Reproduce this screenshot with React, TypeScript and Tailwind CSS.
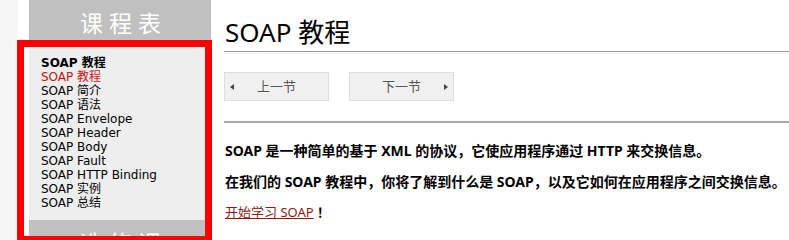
import React from 'react';

const LESSONS = [
  'SOAP 简介',
  'SOAP 语法',
  'SOAP Envelope',
  'SOAP Header',
  'SOAP Body',
  'SOAP Fault',
  'SOAP HTTP Binding',
  'SOAP 实例',
  'SOAP 总结',
];

export default function App() {
  return (
    <div className="relative flex h-[240px] w-[789px] overflow-hidden bg-white font-['DejaVu_Sans','Noto_Sans_CJK_SC',sans-serif] text-black">
      <div className="w-[18px] shrink-0 bg-[#f5f5f5]" />
      <div className="w-[11px] shrink-0" />

      {/* sidebar */}
      <aside className="w-[182px] shrink-0 bg-[#eeeeee]">
        <h2 className="h-[40px] overflow-hidden bg-[#c0c0c0] pl-[7px] text-center font-['Noto_Sans_CJK_SC',sans-serif] text-[23px] leading-[44px] tracking-[6px] text-white">
          课程表
        </h2>
        <ul className="px-[12px] pb-[10px] pt-[16px] text-[12px] leading-[14px]">
          <li className="font-bold">SOAP 教程</li>
          <li className="text-[#cc1111]">SOAP 教程</li>
          {LESSONS.map((l) => (
            <li key={l}>{l}</li>
          ))}
        </ul>
        <h2 className="h-[40px] overflow-hidden bg-[#c0c0c0] pl-[7px] text-center font-['Noto_Sans_CJK_SC',sans-serif] text-[23px] leading-[44px] tracking-[6px] text-white">
          选修课
        </h2>
      </aside>

      {/* main */}
      <main className="flex-1 pl-[13px] font-['Noto_Sans','Noto_Sans_CJK_SC',sans-serif]">
        <h1 className="pl-[1px] pt-[14px] text-[26px] leading-[36px]">SOAP 教程</h1>
        <div className="mt-[1px] h-px bg-[#999999]" />

        <div className="mt-[20px] flex gap-[20px] text-[13px] text-[#555555]">
          <button className="relative h-[29px] w-[105px] border border-[#dddddd] bg-[#f0f0f0]">
            <span className="absolute left-[5px] top-[11px] h-0 w-0 border-y-[3px] border-r-[4px] border-y-transparent border-r-[#444444]" />
            上一节
          </button>
          <button className="relative h-[29px] w-[105px] border border-[#dddddd] bg-[#f0f0f0]">
            下一节
            <span className="absolute right-[5px] top-[11px] h-0 w-0 border-y-[3px] border-l-[4px] border-y-transparent border-l-[#444444]" />
          </button>
        </div>

        <div className="mt-[20px] h-[2px] bg-[#aaaaaa]" />

        <div className="pl-[1px] pt-[18px] text-[14px] leading-[20px]">
          <p className="font-bold">SOAP 是一种简单的基于 XML 的协议，它使应用程序通过 HTTP 来交换信息。</p>
          <p className="mt-[11px] font-bold">在我们的 SOAP 教程中，你将了解到什么是 SOAP，以及它如何在应用程序之间交换信息。</p>
          <p className="mt-[10px] text-[13px]">
            <a href="#" className="text-[#8b1a12] underline">开始学习 SOAP</a>
            <span className="font-bold"> ！</span>
          </p>
        </div>
      </main>

      {/* red highlight box */}
      <div className="absolute left-[17px] top-[40px] h-[203px] w-[195px] border-[7px] border-[#ff0000]" />
    </div>
  );
}
